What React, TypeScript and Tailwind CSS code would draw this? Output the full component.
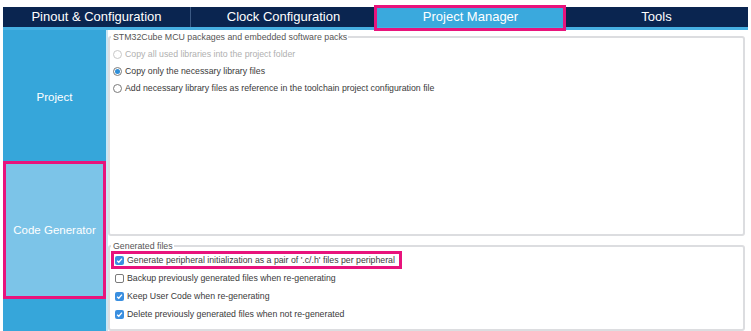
import React from "react";

const PINK = "border-[#e8137c]";

function Radio({ checked, disabled }: { checked?: boolean; disabled?: boolean }) {
  return (
    <span
      className={`inline-flex h-[9px] w-[9px] shrink-0 items-center justify-center rounded-full border ${
        disabled ? "border-[#c8c8c8]" : "border-[#7a7a7a]"
      } bg-white`}
    >
      {checked && <span className="h-[5px] w-[5px] rounded-full bg-[#2f8fd8]" />}
    </span>
  );
}

function Check({ checked }: { checked?: boolean }) {
  return checked ? (
    <span className="inline-flex h-[9px] w-[9px] shrink-0 items-center justify-center rounded-[2px] bg-[#3a8fe0]">
      <svg width="7" height="7" viewBox="0 0 8 8">
        <path d="M1.3 4.2 L3.2 6 L6.8 1.8" stroke="white" strokeWidth="1.5" fill="none" />
      </svg>
    </span>
  ) : (
    <span className="inline-flex h-[9px] w-[9px] shrink-0 rounded-[2px] border border-[#7a7a7a] bg-white" />
  );
}

export default function App() {
  const small = "whitespace-nowrap text-[8.75px] leading-none text-[#3a3a3a]";
  return (
    <div
      className="relative h-[331px] w-[751px] overflow-hidden bg-white"
      style={{ fontFamily: '"Liberation Sans", Arial, sans-serif' }}
    >
      <div className="px-[3px] pt-[7px]">
        {/* Tabs */}
        <div className="flex h-[20px] w-[745px] bg-[#0a2550] text-[13px] text-white">
          <div className="flex w-[188px] items-center justify-center border-r border-[#3c5a84]">
            Pinout &amp; Configuration
          </div>
          <div className="flex w-[185px] items-center justify-center">Clock Configuration</div>
          <div className="relative flex w-[189px] items-center justify-center bg-[#3aa9dd]">
            Project Manager
            <div className={`absolute -left-[2px] -right-[1px] -top-[2px] -bottom-[4px] border-[3px] ${PINK}`} />
          </div>
          <div className="flex flex-1 items-center justify-center">Tools</div>
        </div>
        <div className="h-[3px] w-[745px] bg-[#47b0e2]" />

        {/* Body */}
        <div className="flex h-[301px]">
          {/* Sidebar */}
          <div className="flex w-[105px] flex-col border-r-2 border-[#c9e6f5] bg-[#36a6da] text-[11.5px] text-white">
            <div className="flex h-[128px] items-center justify-center pt-[8px]">Project</div>
            <div className={`mt-[3px] flex h-[138px] items-center justify-center border-[3px] ${PINK} bg-[#7cc4e8] pt-[2px]`}>
              Code Generator
            </div>
          </div>

          {/* Content */}
          <div className="flex flex-1 flex-col pl-0 pr-[3px] pt-[6px]">
            <div className="relative h-[200px] rounded-[3px] border-2 border-[#dcdde0]">
              <div className="absolute -top-[5px] left-[1px] bg-white pl-[2px] pr-[1px] text-[8.8px] leading-none text-[#555]">
                STM32Cube MCU packages and embedded software packs
              </div>
              <div className="flex flex-col gap-[8px] pl-[3px] pt-[12px]">
                <div className="flex items-center gap-[3px]">
                  <Radio disabled />
                  <span className={`${small} text-[#b0b0b0]`}>Copy all used libraries into the project folder</span>
                </div>
                <div className="flex items-center gap-[3px]">
                  <Radio checked />
                  <span className={small}>Copy only the necessary library files</span>
                </div>
                <div className="flex items-center gap-[3px]">
                  <Radio />
                  <span className={small}>
                    Add necessary library files as reference in the toolchain project configuration file
                  </span>
                </div>
              </div>
            </div>

            <div className="relative mt-[9px] flex-1 rounded-[3px] border-2 border-[#dcdde0]">
              <div className="absolute -top-[5px] left-[1px] bg-white pl-[2px] pr-[1px] text-[8.8px] leading-none text-[#555]">
                Generated files
              </div>
              <div className="flex flex-col gap-[1px] pt-[4px]">
                <div className={`ml-[1px] flex h-[18px] w-[291px] items-center gap-[3px] border-[3px] ${PINK} pl-[1px]`}>
                  <Check checked />
                  <span className={small}>Generate peripheral initialization as a pair of '.c/.h' files per peripheral</span>
                </div>
                <div className="flex h-[17px] items-center gap-[3px] pl-[5px]">
                  <Check />
                  <span className={small}>Backup previously generated files when re-generating</span>
                </div>
                <div className="flex h-[17px] items-center gap-[3px] pl-[5px]">
                  <Check checked />
                  <span className={small}>Keep User Code when re-generating</span>
                </div>
                <div className="flex h-[17px] items-center gap-[3px] pl-[5px]">
                  <Check checked />
                  <span className={small}>Delete previously generated files when not re-generated</span>
                </div>
              </div>
            </div>
          </div>
        </div>
      </div>
    </div>
  );
}
